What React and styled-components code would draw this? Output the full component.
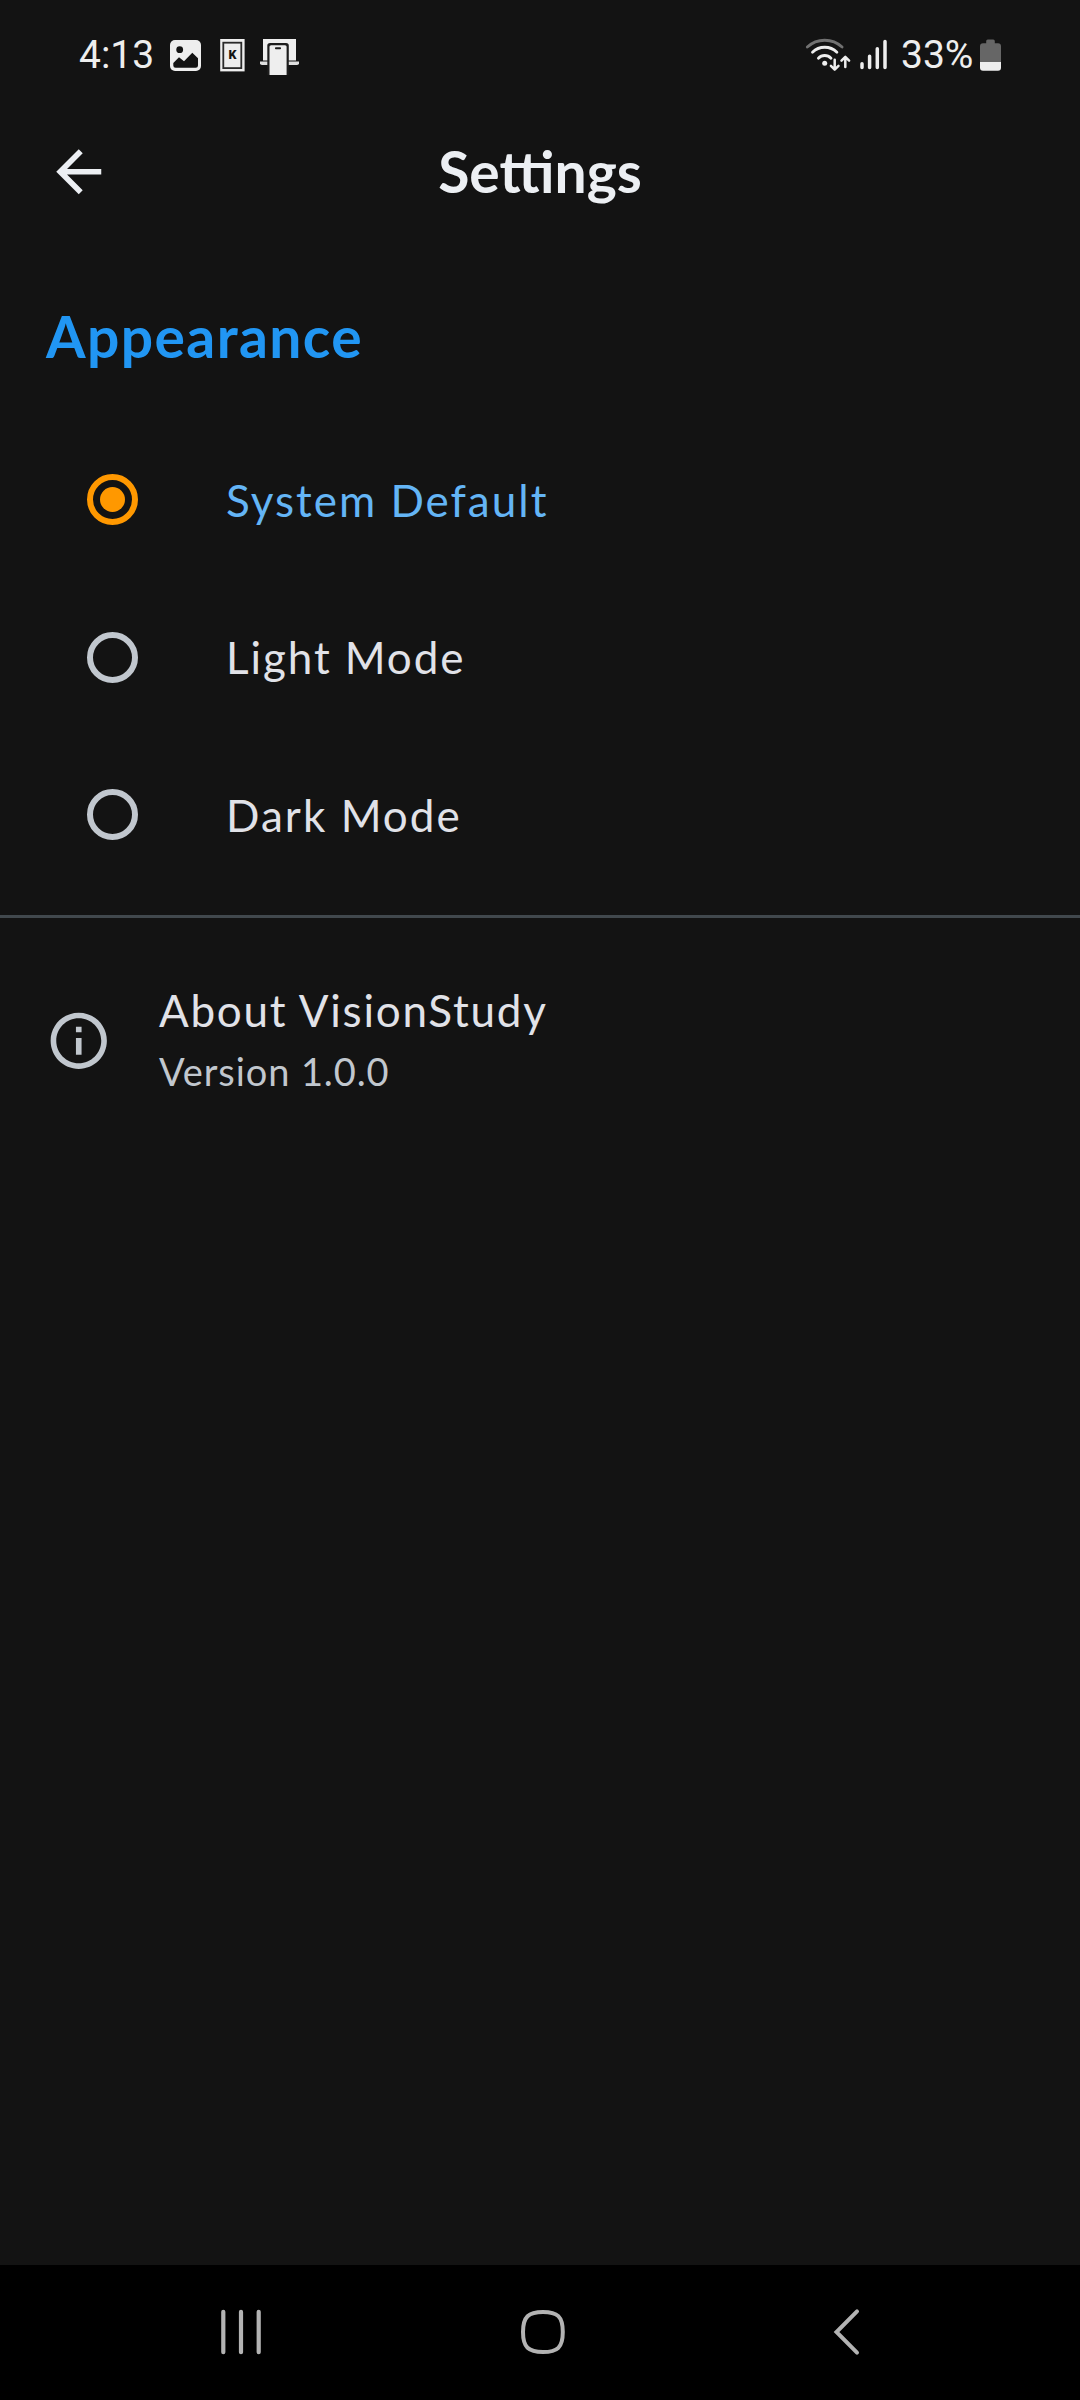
import React, { useState } from "react";
import styled, { createGlobalStyle } from "styled-components";

const GlobalStyle = createGlobalStyle`
  * {
    box-sizing: border-box;
  }
  body {
    margin: 0;
    background-color: #131313;
  }
`;

const Screen = styled.div`
  display: flex;
  flex-direction: column;
  width: 1080px;
  height: 2400px;
  background-color: #131313;
  color: #e1e2e8;
  font-family: "Lato", sans-serif;
  overflow: hidden;
  svg {
    display: block;
    flex: none;
    overflow: visible;
  }
`;

const StatusBar = styled.div`
  display: flex;
  justify-content: space-between;
  align-items: center;
  height: 93px;
  padding: 17px 79px 0 79px;
  color: #eeeeee;
  font-family: "Roboto", sans-serif;
  font-size: 39px;
  line-height: 46px;
  white-space: nowrap;
`;

const StatusGroup = styled.div`
  display: flex;
  align-items: center;
  gap: ${(props) => props.$gap || "0"};
`;

const StatusText = styled.span`
  width: ${(props) => props.$width};
  margin: ${(props) => props.$margin || "0"};
`;

const AppBar = styled.header`
  display: grid;
  grid-template-columns: 158px 1fr 158px;
  align-items: center;
  height: 157px;
`;

const BackButton = styled.button`
  padding: 0 0 0 45px;
  border: none;
  background: none;
  color: #eceff3;
`;

const Title = styled.h1`
  margin: 0;
  text-align: center;
  color: #eceff3;
  font-size: 57px;
  font-weight: 700;
  line-height: 70px;
  padding-bottom: 2px;
`;

const SectionTitle = styled.h2`
  display: flex;
  align-items: center;
  height: 171px;
  margin: 0;
  padding: 0 46px;
  color: #2196f3;
  font-size: 57px;
  font-weight: 700;
  letter-spacing: 1.4px;
`;

const OptionRow = styled.div`
  display: flex;
  align-items: center;
  height: 157.6px;
  padding-left: 87px;
  cursor: pointer;
`;

const Radio = styled.span`
  display: flex;
  align-items: center;
  justify-content: center;
  flex: none;
  width: 51px;
  height: 51px;
  margin-right: 88px;
  border: 6px solid ${(props) => (props.$checked ? "#ff9800" : "#c1c7ce")};
  border-radius: 50%;
  &::after {
    content: "";
    width: 25px;
    height: 25px;
    border-radius: 50%;
    background-color: ${(props) => (props.$checked ? "#ff9800" : "transparent")};
  }
`;

const OptionLabel = styled.span`
  color: ${(props) => (props.$checked ? "#64b5f6" : "#e1e2e8")};
  font-size: 44px;
  letter-spacing: ${(props) => props.$spacing};
  white-space: nowrap;
`;

const Divider = styled.div`
  height: 3px;
  margin: 21px 0 21px;
  background-color: #41484d;
`;

const AboutRow = styled.div`
  display: flex;
  align-items: center;
  gap: 46.5px;
  height: 203px;
  padding-left: 45px;
  color: #c1c7ce;
`;

const AboutText = styled.div`
  padding-top: 2px;
`;

const AboutTitle = styled.div`
  color: #e1e2e8;
  font-size: 44px;
  line-height: 61.5px;
  letter-spacing: 1.75px;
`;

const AboutVersion = styled.div`
  font-size: 38px;
  line-height: 61.5px;
  letter-spacing: 0.9px;
`;

const NavBar = styled.nav`
  display: flex;
  justify-content: space-between;
  align-items: center;
  height: 135px;
  margin-top: auto;
  padding: 0 219px 3px;
  background-color: #000000;
`;

const HomeButton = styled.div`
  margin-right: 10px;
`;

const ImageIcon = () => (
  <svg width="34" height="42" viewBox="0 0 34 42">
    <rect x="0" y="6" width="31" height="31" rx="5" fill="#eeeeee" />
    <circle cx="9.7" cy="15.7" r="3.4" fill="#131313" />
    <path
      d="M3.3 28.9L9 23.2L14 27.3L22.3 18.7L28 24.2V31.4Q28 33.7 25.7 33.7H5.6Q3.3 33.7 3.3 31.4Z"
      fill="#131313"
    />
  </svg>
);

const CardIcon = () => (
  <svg width="24" height="42" viewBox="0 0 24 42">
    <rect x="0.2" y="5" width="24.4" height="32.4" fill="#eeeeee" />
    <rect x="3.3" y="8.7" width="18" height="25.4" fill="none" stroke="#2a2a2a" strokeWidth="1.8" />
    <text
      x="12.5"
      y="25.4"
      textAnchor="middle"
      fontFamily="Roboto, sans-serif"
      fontSize="12.5"
      fontWeight="900"
      fill="#131313"
    >
      K
    </text>
  </svg>
);

const DeviceIcon = () => (
  <svg width="39" height="42" viewBox="0 0 39 42">
    <path d="M3 5H36V26.4H3Z" fill="#eeeeee" />
    <path d="M0 27.6H39V29.2Q39 31 37 31H2Q0 31 0 29.2Z" fill="#e0e0e0" />
    <path d="M7.3 41V11.7Q7.3 8.9 10.1 8.9H26Q28.8 8.9 28.8 11.7V41Z" fill="#1d1d1d" />
    <path d="M9.5 41V12.8Q9.5 11.2 11.1 11.2H25Q26.6 11.2 26.6 12.8V41Z" fill="#eeeeee" />
    <rect x="15" y="13.2" width="6" height="2" rx="0.8" fill="#1d1d1d" />
  </svg>
);

const WifiIcon = () => (
  <svg
    width="45"
    height="42"
    viewBox="0 0 45 42"
    fill="none"
    stroke="#eeeeee"
    strokeWidth="2.8"
    strokeLinecap="round"
  >
    <path d="M1.3 13.1A25.5 25.5 0 0 1 36.1 13.1" stroke="#717171" />
    <path d="M6.5 18.3A17.3 17.3 0 0 1 30.9 18.3" />
    <path d="M12.4 24.2A8.7 8.7 0 0 1 25 24.2" />
    <circle cx="18.7" cy="29.3" r="2.5" fill="#eeeeee" stroke="none" />
    <g strokeWidth="2.5" strokeLinejoin="round">
      <path d="M28.7 25.8V35.6M24.9 31.9L28.7 35.7L32.5 31.9" />
      <path d="M39.3 33V23M35.5 26.6L39.3 22.8L43.1 26.6" />
    </g>
  </svg>
);

const SignalIcon = () => (
  <svg width="42" height="42" viewBox="-9 0 42 42" stroke="#eeeeee" strokeWidth="3.5" strokeLinecap="round">
    <path d="M2 29.8V33.4M9.6 22.2V33.4M17.3 14.8V33.4M25 7.4V33.4" />
  </svg>
);

const BatteryIcon = () => (
  <svg width="21" height="42" viewBox="0 0 21 42">
    <path
      d="M6.2 9.3V7Q6.2 5.4 7.8 5.4H13.2Q14.8 5.4 14.8 7V9.3H18Q21 9.3 21 12.3V28H0V12.3Q0 9.3 3 9.3Z"
      fill="#666666"
    />
    <path d="M0 28H21V33.7Q21 36.7 18 36.7H3Q0 36.7 0 33.7Z" fill="#eeeeee" />
  </svg>
);

const ArrowBackIcon = () => (
  <svg width="67.5" height="67.5" viewBox="0 0 24 24" fill="currentColor">
    <path d="M20 11H7.83l5.59-5.59L12 4l-8 8 8 8 1.41-1.41L7.83 13H20v-2z" />
  </svg>
);

const InfoIcon = () => (
  <svg width="67.5" height="67.5" viewBox="0 0 24 24" fill="currentColor">
    <path d="M11 7h2v2h-2zm0 4h2v6h-2zm1-9C6.48 2 2 6.48 2 12s4.48 10 10 10 10-4.48 10-10S17.52 2 12 2zm0 18c-4.41 0-8-3.59-8-8s3.59-8 8-8 8 3.59 8 8-3.59 8-8 8z" />
  </svg>
);

const RecentsIcon = () => (
  <svg width="44" height="48" viewBox="0 0 44 48" stroke="#b3b3b3" strokeWidth="4.2" strokeLinecap="round">
    <path d="M4.3 4.8V45.2M22 4.8V45.2M39.7 4.8V45.2" />
  </svg>
);

const HomeIcon = () => (
  <svg width="48" height="48" viewBox="0 0 48 48" fill="none" stroke="#b3b3b3" strokeWidth="4">
    <path d="M24 5C38.5 5 43.8 9.5 43.8 25S38.5 45 24 45S4 40.5 4 25S9.5 5 24 5Z" />
  </svg>
);

const BackIcon = () => (
  <svg
    width="28"
    height="48"
    viewBox="0 0 28 48"
    fill="none"
    stroke="#b3b3b3"
    strokeWidth="4"
    strokeLinecap="round"
  >
    <path d="M24 4.4L3.5 25L24 45.6" />
  </svg>
);

const App = () => {
  const [mode, setMode] = useState("system");

  return (
    <Screen>
      <GlobalStyle />
      <StatusBar>
        <StatusGroup $gap="16px">
          <StatusText $width="75px">4:13</StatusText>
          <ImageIcon />
          <CardIcon />
          <DeviceIcon />
        </StatusGroup>
        <StatusGroup>
          <WifiIcon />
          <SignalIcon />
          <StatusText $width="73px" $margin="0 6px 0 8px">
            33%
          </StatusText>
          <BatteryIcon />
        </StatusGroup>
      </StatusBar>

      <AppBar>
        <BackButton>
          <ArrowBackIcon />
        </BackButton>
        <Title>Settings</Title>
      </AppBar>

      <SectionTitle>Appearance</SectionTitle>
      {modes.map((element) => (
        <OptionRow key={element.id} onClick={() => setMode(element.id)}>
          <Radio $checked={mode === element.id} />
          <OptionLabel $checked={mode === element.id} $spacing={element.spacing}>
            {element.label}
          </OptionLabel>
        </OptionRow>
      ))}

      <Divider />

      <AboutRow>
        <InfoIcon />
        <AboutText>
          <AboutTitle>About VisionStudy</AboutTitle>
          <AboutVersion>Version 1.0.0</AboutVersion>
        </AboutText>
      </AboutRow>

      <NavBar>
        <RecentsIcon />
        <HomeButton>
          <HomeIcon />
        </HomeButton>
        <BackIcon />
      </NavBar>
    </Screen>
  );
};

const modes = [
  { id: "system", label: "System Default", spacing: "2px" },
  { id: "light", label: "Light Mode", spacing: "1.9px" },
  { id: "dark", label: "Dark Mode", spacing: "2.05px" },
];

export default App;
